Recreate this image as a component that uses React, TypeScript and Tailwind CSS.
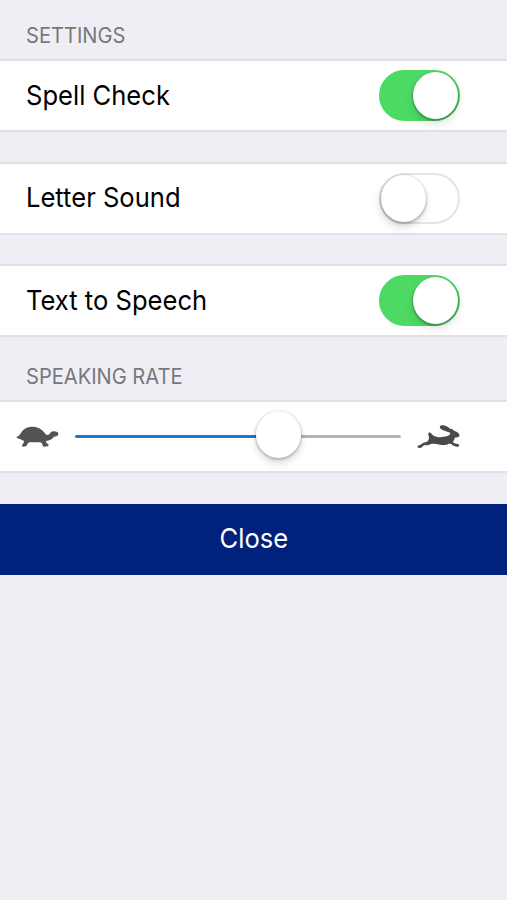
import { useState } from "react";
import clsx from "clsx";

interface ToggleProps {
  label: string;
  checked: boolean;
  onChange: (checked: boolean) => void;
}

function Toggle({ label, checked, onChange }: ToggleProps) {
  return (
    <button
      type="button"
      role="switch"
      aria-label={label}
      aria-checked={checked}
      onClick={() => onChange(!checked)}
      className={clsx(
        "flex h-[51px] w-[81px] items-center rounded-full border-2",
        checked
          ? "justify-end border-[#4cd964] bg-[#4cd964]"
          : "border-[#e4e4e4] bg-white"
      )}
    >
      <span
        className={clsx(
          "h-[47px] w-[45px] rounded-[50%] bg-white",
          checked
            ? "shadow-[0_1px_1px_1px_rgba(0,0,0,0.22),0_5px_10px_rgba(0,0,0,0.12)]"
            : "shadow-[0_1px_2px_1px_rgba(0,0,0,0.2),-1px_5px_9px_rgba(0,0,0,0.15)]"
        )}
      />
    </button>
  );
}

function SettingRow({ label, checked, onChange }: ToggleProps) {
  return (
    <div className="flex h-[73px] items-center justify-between border-y-2 border-[#e0e0e6] bg-white pr-[47px] pl-[26px]">
      <span className="origin-left scale-x-[0.93] text-[27.5px] leading-none whitespace-nowrap text-black">
        {label}
      </span>
      <Toggle label={label} checked={checked} onChange={onChange} />
    </div>
  );
}

function SectionTitle({ children }: { children: string }) {
  return (
    <h2 className="origin-left scale-x-[0.957] text-[21px] leading-[26px] whitespace-nowrap text-[#77777c]">
      {children}
    </h2>
  );
}

function Turtle() {
  return (
    <svg viewBox="14 14 129 69" className="h-[23px] w-[43px]" fill="#535353">
      <path d="M16 50 C22 48 25 44 29 38 C36 25 48 19 63 19 C79 19 92 26 101 39 C105 47 113 44 117 37 C121 32 130 31 138 35 C143 38 142 44 137 47 C133 49 129 49 127 50 C122 58 114 61 104 62 C103 67 106 69 110 71 C114 74 111 79 106 78 C100 79 95 80 94 76 C94 72 91 68 87 66 L54 66 C50 67 48 71 47 75 C44 80 36 79 32 78 C30 75 34 73 35 70 C38 66 39 64 37 61 C30 58 24 55 16 53 Z" />
    </svg>
  );
}

function Hare() {
  return (
    <svg viewBox="14 12 129 75" className="h-[25px] w-[43px]" fill="#494949">
      <path d="M16 79 C18 75 24 76 28 72 C32 67 38 67 44 65 C49 62 50 57 50 51 C47 45 47 39 51 37 C55 38 58 42 61 45 C68 50 77 53 87 51 C97 49 106 50 112 44 L114 38 C105 35 93 32 86 27 C80 23 82 16 89 16 C99 15 108 21 115 28 C116 23 122 28 126 33 C133 34 139 38 141 44 C143 51 134 52 127 53 C127 59 124 62 121 65 C125 71 131 70 137 72 C142 74 142 80 137 80 C130 81 127 78 121 76 C117 73 113 70 109 71 C102 76 92 76 83 74 C73 72 63 70 54 73 C48 77 42 76 35 76 C31 79 28 84 22 84 C17 84 14 82 16 79 Z" />
    </svg>
  );
}

function RateSlider({ value }: { value: number }) {
  return (
    <div
      role="slider"
      aria-label="Speaking Rate"
      aria-valuenow={value}
      className="flex w-[326px] items-center"
    >
      <div
        className="h-[3px] rounded-l-full bg-[#1976d2]"
        style={{ width: `${value}%` }}
      />
      <div className="h-[47px] w-[45px] shrink-0 -translate-y-[2px] rounded-[50%] bg-white shadow-[0_1px_2px_1px_rgba(0,0,0,0.18),0_5px_9px_rgba(0,0,0,0.14)]" />
      <div className="h-[3px] flex-1 rounded-r-full bg-[#b5b5b5]" />
    </div>
  );
}

export default function App() {
  const [spellCheck, setSpellCheck] = useState(true);
  const [letterSound, setLetterSound] = useState(false);
  const [textToSpeech, setTextToSpeech] = useState(true);

  return (
    <main className="min-h-screen bg-[#efeef4] font-['Inter',sans-serif]">
      <div className="h-[59px] pt-[23px] pl-[26px]">
        <SectionTitle>SETTINGS</SectionTitle>
      </div>

      <div className="flex flex-col gap-[29.5px]">
        <SettingRow
          label="Spell Check"
          checked={spellCheck}
          onChange={setSpellCheck}
        />
        <SettingRow
          label="Letter Sound"
          checked={letterSound}
          onChange={setLetterSound}
        />
        <SettingRow
          label="Text to Speech"
          checked={textToSpeech}
          onChange={setTextToSpeech}
        />
      </div>

      <div className="h-[63px] pt-[27px] pl-[26px]">
        <SectionTitle>SPEAKING RATE</SectionTitle>
      </div>

      <div className="flex h-[73px] items-center justify-between border-y-2 border-[#e0e0e6] bg-white pr-[47px] pl-4">
        <Turtle />
        <RateSlider value={55.5} />
        <Hare />
      </div>

      <button
        type="button"
        className="mt-[31px] flex h-[71px] w-full items-center justify-center bg-[#00217c] pb-0.5 text-white"
      >
        <span className="scale-x-[0.93] text-[27.5px] leading-none">Close</span>
      </button>
    </main>
  );
}
